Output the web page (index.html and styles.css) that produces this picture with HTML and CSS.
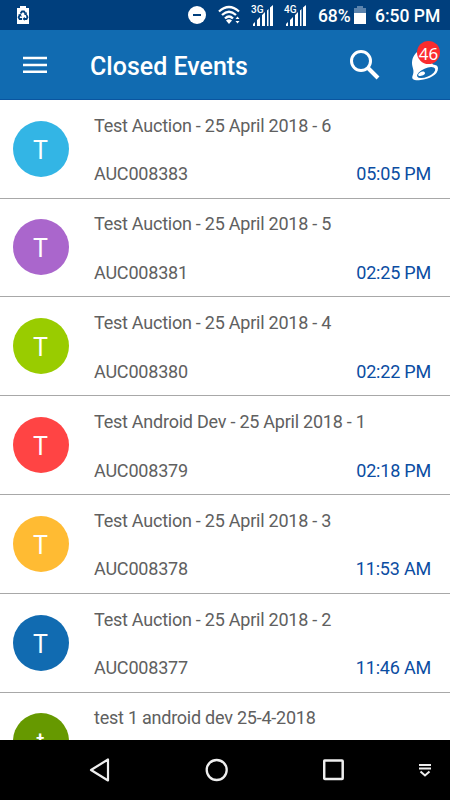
FILE: index.html
```html
<!DOCTYPE html>
<html lang="en">
<head>
<meta charset="utf-8">
<title>Closed Events</title>
<link rel="stylesheet" href="styles.css">
</head>
<body>
<div class="screen">
  <div class="status">
    <svg class="saver" width="14" height="20" viewBox="0 0 14 20"><path fill="#fff" d="M4 1h6v2h3v16H1V3h3z"/><g fill="none" stroke="#003f7d" stroke-width="1.800"><path d="M4.500 8.500 6 6.500h2l1.500 2.300M10.500 10l1 2.200-1 1.800H8M6 14H3.600l-1-1.700 1.400-2.500"/></g><path fill="#003f7d" d="M10.800 7v3H8zM8.700 11.800v4L6.500 14zM2 9.800l3-.7.700 3z"/></svg>
    <svg class="dnd" width="18" height="18" viewBox="0 0 18 18"><circle cx="9" cy="9" r="9" fill="#fff"/><path d="M5 9h8" stroke="#003f7d" stroke-width="2"/></svg>
    <svg class="wifi" width="23" height="20" viewBox="0 0 23 20"><g fill="none" stroke="#fff" stroke-width="2.300"><path d="M1 6.500Q11 -2.500 21 6.500M4 10Q11 3.500 18 10M7 13.500Q11 9.500 15 13.500"/></g><path fill="#fff" d="M8 15.500Q11 13 14 15.500L11 19zM17.500 14l2-2.500 2 2.500zM17.500 16l2 2.500 2-2.500z"/></svg>
    <div class="signal"><svg width="22" height="22" viewBox="0 0 22 22"><path fill="#fff" d="M1 21v-2l2-2v4zM5 21v-6l3-3v9zM10 21V10l3-3v14zM15 21V5.500l1.500-1.500v17zM18 21V2.500L21 0v21z"/></svg><span class="net">3G</span></div>
    <div class="signal"><svg width="22" height="22" viewBox="0 0 22 22"><path fill="#fff" d="M1 21v-2l2-2v4zM5 21v-6l3-3v9zM10 21V10l3-3v14zM15 21V5.500l1.500-1.500v17zM18 21V2.500L21 0v21z"/></svg><span class="net">4G</span></div>
    <span class="percent">68%</span>
    <svg class="battery" width="12" height="18" viewBox="0 0 12 18"><path fill="#5b83ad" d="M3 0h6v2h3v16H0V2h3z"/><path fill="#fff" d="M0 7h12v11H0z"/></svg>
    <span class="clock">6:50 PM</span>
  </div>
  <header class="bar">
    <svg class="menu" width="24" height="18" viewBox="0 0 24 18"><path d="M0 2h24M0 9h24M0 15.700h24" stroke="#fff" stroke-width="2.500"/></svg>
    <h1 class="title">Closed Events</h1>
    <svg class="search" width="30" height="30" viewBox="0 0 30 30"><g fill="none" stroke="#fff"><circle cx="11" cy="11" r="9.500" stroke-width="3"/><path d="m18 18 10 10" stroke-width="4"/></g></svg>
    <div class="alerts">
      <svg width="28" height="32" viewBox="0 0 28 32"><path fill="#fff" d="M10 0C4 4 1 8 1 14c0 5 3 7 .500 13-1.500 4 3.500 5 8 4C18 30 27 26 27 19.500c0-3-2-3.500-5-4z"/><ellipse cx="15.200" cy="23.600" rx="9.700" ry="4.300" transform="rotate(-23 15.200 23.600)" fill="#116bb1"/><path fill="#fff" d="M7 26c1-3 6-5 7-2 0 2-3 3-6 3z"/></svg>
      <span class="badge">46</span>
    </div>
  </header>
  <main class="list">
    <div class="row"><div class="avatar sky">T</div><div class="info"><div class="name">Test Auction - 25 April 2018 - 6</div><div class="meta"><span class="code">AUC008383</span><span class="time">05:05 PM</span></div></div></div>
    <div class="row"><div class="avatar purple">T</div><div class="info"><div class="name">Test Auction - 25 April 2018 - 5</div><div class="meta"><span class="code">AUC008381</span><span class="time">02:25 PM</span></div></div></div>
    <div class="row"><div class="avatar lime">T</div><div class="info"><div class="name">Test Auction - 25 April 2018 - 4</div><div class="meta"><span class="code">AUC008380</span><span class="time">02:22 PM</span></div></div></div>
    <div class="row"><div class="avatar red">T</div><div class="info"><div class="name">Test Android Dev - 25 April 2018 - 1</div><div class="meta"><span class="code">AUC008379</span><span class="time">02:18 PM</span></div></div></div>
    <div class="row"><div class="avatar amber">T</div><div class="info"><div class="name">Test Auction - 25 April 2018 - 3</div><div class="meta"><span class="code">AUC008378</span><span class="time">11:53 AM</span></div></div></div>
    <div class="row"><div class="avatar blue">T</div><div class="info"><div class="name">Test Auction - 25 April 2018 - 2</div><div class="meta"><span class="code">AUC008377</span><span class="time">11:46 AM</span></div></div></div>
    <div class="row"><div class="avatar green">t</div><div class="info"><div class="name">test 1 android dev 25-4-2018</div></div></div>
  </main>
  <nav class="nav">
    <svg class="back" width="22" height="26" viewBox="0 0 22 26"><path d="M19 2.500v21L2 13z" fill="none" stroke="#eee" stroke-width="2.200" stroke-linejoin="round"/></svg>
    <svg class="home" width="24" height="24" viewBox="0 0 24 24"><circle cx="11.700" cy="12" r="10" fill="none" stroke="#eee" stroke-width="2.300"/></svg>
    <svg class="recent" width="22" height="22" viewBox="0 0 22 22"><rect x="1.200" y="1.500" width="18.500" height="18.500" rx=".7" fill="none" stroke="#eee" stroke-width="2.500"/></svg>
    <svg class="hide" width="12" height="14" viewBox="0 0 12 14"><path d="M0 2h12M0 5.500h12M1.500 8.500 6 12.500l4.500-4" fill="none" stroke="#eee" stroke-width="2"/></svg>
  </nav>
</div>
</body>
</html>
```
FILE: styles.css
```css
* { box-sizing: border-box; }
body { margin: 0; font-family: Roboto, "Liberation Sans", sans-serif; }
svg { display: block; flex: none; }
.screen { width: 450px; height: 800px; display: flex; flex-direction: column; overflow: hidden; background: #fff; }
.status { height: 30px; flex: none; background: #003f7d; display: flex; align-items: center; color: #fff; font-weight: 500; font-size: 17.500px; white-space: nowrap; }
.saver { margin-left: 16px; }
.dnd { margin-left: 158px; }
.wifi { margin-left: 12px; }
.signal { position: relative; margin-left: 11px; padding-top: 2px; }
.net { position: absolute; left: -1px; top: 1px; font-size: 10px; line-height: 12px; }
.percent { width: 33px; margin-left: 11px; font-size: 17.500px; letter-spacing: -.1px; }
.battery { margin-left: 3px; }
.clock { margin-left: 9px; }
.percent, .clock { padding-top: 1px; }
.bar { height: 70px; flex: none; background: #116bb1; border-bottom: 1px solid #0a55a0; display: flex; align-items: center; color: #fff; }
.menu { margin-left: 23px; }
.title { margin: 4px 0 0 43px; width: 259px; font-size: 25px; line-height: 30px; font-weight: 500; }
.search { margin-left: 1px; }
.alerts { position: relative; margin: -7px 0 0 31px; }
.alerts svg { margin-top: 8px; }
.badge { position: absolute; left: 6px; top: 0; width: 23px; height: 23px; border-radius: 50%; background: #fb2c2e; font-family: "Noto Sans", Roboto, sans-serif; font-size: 17px; line-height: 25px; text-align: center; }
.list { flex: 1; min-height: 0; overflow: hidden; }
.row { height: 98.800px; display: flex; align-items: center; border-bottom: 1px solid #a8a8a8; padding: 0 19px 0 12.500px; }
.row:first-child { height: 98.600px; }
.avatar { width: 56px; height: 56px; border-radius: 50%; color: #fff; font-size: 25px; line-height: 59px; text-align: center; }
.sky { background: #33b5e5; }
.purple { background: #aa66cc; }
.lime { background: #99cc00; }
.red { background: #ff4444; }
.amber { background: #ffbb33; }
.blue { background: #116bb1; }
.green { background: #669900; }
.info { flex: 1; align-self: stretch; margin-left: 25.500px; padding-top: 13.800px; font-size: 18px; line-height: 24px; color: #606060; }
.name { letter-spacing: -.24px; }
.meta { display: flex; justify-content: space-between; margin-top: 24.600px; letter-spacing: -.2px; }
.time { color: #0b4da2; }
.nav { height: 60px; flex: none; background: #000; display: flex; align-items: center; }
.back { margin-left: 89px; }
.home { margin-left: 94px; }
.recent { margin-left: 94px; }
.hide { margin-left: 74px; }
```
